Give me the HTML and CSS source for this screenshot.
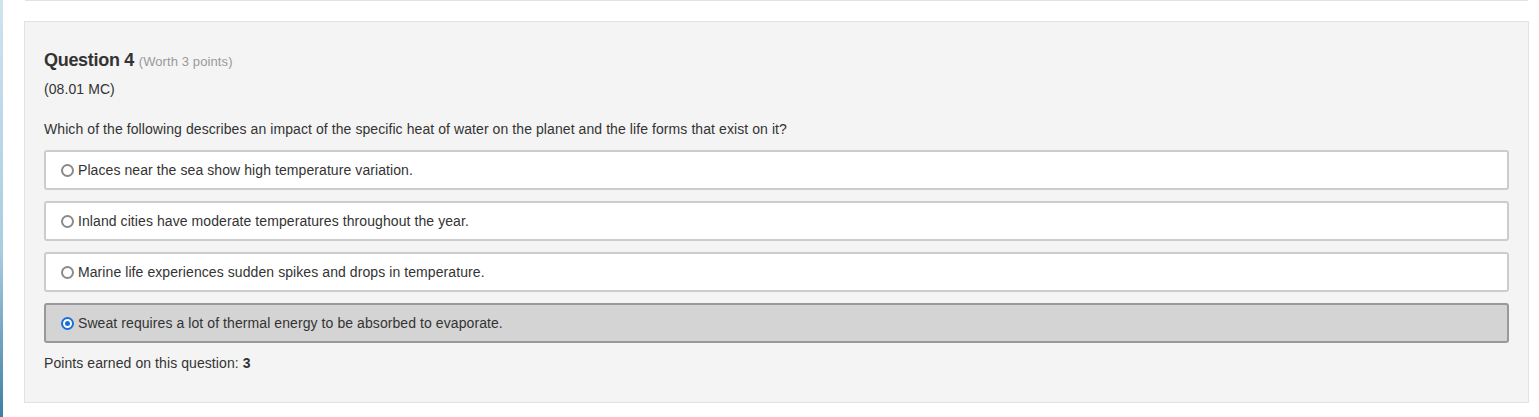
FILE: index.html
```html
<!DOCTYPE html>
<html>
<head>
<meta charset="utf-8">
<link rel="stylesheet" href="styles.css">
</head>
<body>
<div class="page">
  <div class="edge"></div>
  <div class="main">
    <div class="prev"></div>
    <div class="card">
      <h3 class="title">Question 4 <span class="worth">(Worth 3 points)</span></h3>
      <p class="code">(08.01 MC)</p>
      <p class="question">Which of the following describes an impact of the specific heat of water on the planet and the life forms that exist on it?</p>
      <div class="options">
        <div class="option"><span class="radio"></span><span class="label">Places near the sea show high temperature variation.</span></div>
        <div class="option"><span class="radio"></span><span class="label">Inland cities have moderate temperatures throughout the year.</span></div>
        <div class="option"><span class="radio"></span><span class="label">Marine life experiences sudden spikes and drops in temperature.</span></div>
        <div class="option selected"><span class="radio checked"></span><span class="label">Sweat requires a lot of thermal energy to be absorbed to evaporate.</span></div>
      </div>
      <p class="points">Points earned on this question: <b>3</b></p>
    </div>
  </div>
</div>
</body>
</html>
```
FILE: styles.css
```css
html, body {
  margin: 0;
  padding: 0;
  background: #ffffff;
  font-family: "Liberation Sans", Arial, sans-serif;
  color: #333333;
}
.page {
  display: flex;
  height: 417px;
  overflow: hidden;
}
.edge {
  width: 3px;
  flex: none;
  background: linear-gradient(to bottom, #cfe3ee 0%, #a9cde0 60%, #3e7fa6 100%);
}
.main {
  flex: 1;
  padding: 0 10px 0 21px;
}
.prev {
  height: 1px;
  margin: 0 1px;
  background: #e2e2e2;
}
.card {
  margin-top: 20px;
  background: #f4f4f4;
  border: 1px solid #e3e3e3;
  padding: 28px 19px 29px 19px;
}
.title {
  margin: 0;
  font-size: 18px;
  line-height: 20px;
  font-weight: bold;
  color: #333333;
  letter-spacing: -0.3px;
}
.worth {
  font-size: 13px;
  font-weight: normal;
  color: #999999;
  letter-spacing: 0.1px;
}
.code {
  margin: 7px 0 0 0;
  font-size: 14px;
  line-height: 20px;
  letter-spacing: 0.08px;
}
.question {
  margin: 20px 0 0 0;
  font-size: 14px;
  line-height: 20px;
  letter-spacing: 0.08px;
}
.options {
  margin-top: 11px;
  display: flex;
  flex-direction: column;
  gap: 11px;
}
.option {
  height: 40px;
  box-sizing: border-box;
  border: 2px solid #cccccc;
  border-radius: 3px;
  background: #ffffff;
  display: flex;
  align-items: center;
  padding-left: 15px;
  font-size: 14px;
  letter-spacing: 0.08px;
}
.option.selected {
  background: #d4d4d4;
  border-color: #999999;
}
.radio {
  width: 13px;
  height: 13px;
  box-sizing: border-box;
  border: 2px solid #8a8a8a;
  border-radius: 50%;
  background: #ffffff;
  margin-right: 4px;
  flex: none;
  position: relative;
}
.radio.checked {
  border-color: #1a6fd6;
}
.radio.checked::after {
  content: "";
  position: absolute;
  left: 2px;
  top: 2px;
  width: 5px;
  height: 5px;
  border-radius: 50%;
  background: #1a6fd6;
}
.points {
  margin: 10px 0 0 0;
  font-size: 14px;
  line-height: 20px;
  letter-spacing: 0.08px;
}
```
